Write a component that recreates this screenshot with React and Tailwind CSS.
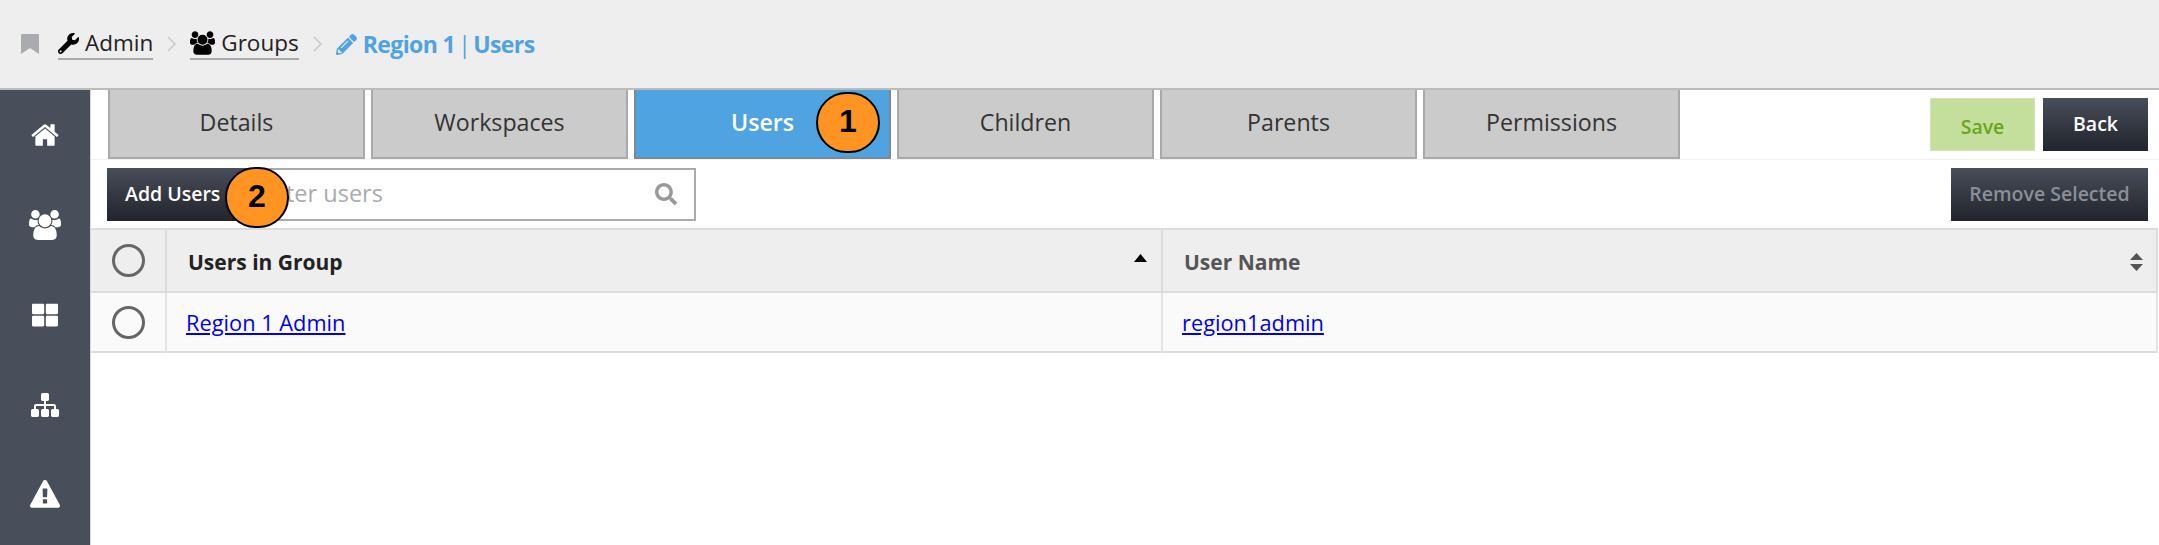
import React from 'react';
import { FaWrench, FaPencilAlt, FaThLarge, FaSearch } from 'react-icons/fa';

const tabs = ['Details', 'Workspaces', 'Users', 'Children', 'Parents', 'Permissions'];

// Font Awesome 4 shapes, the 5 versions in react-icons look different
const UsersIcon = ({ className }) => (
  <svg viewBox="0 0 1920 1792" fill="currentColor" className={className}>
    <path d="M593 896q-162 5-265 128h-134q-82 0-138-40.5t-56-118.5q0-353 124-353 6 0 43.5 21t97.5 42.5 119 21.5q67 0 133-23-5 37-5 66 0 139 81 256zm1071 637q0 120-73 189.5t-194 69.5h-874q-121 0-194-69.5t-73-189.5q0-53 3.5-103.5t14-109 26.5-108.5 43-97.5 62-81 85.5-53.5 111.5-20q10 0 43 21.5t73 48 107 48 135 21.5 135-21.5 107-48 73-48 43-21.5q61 0 111.5 20t85.5 53.5 62 81 43 97.5 26.5 108.5 14 109 3.5 103.5zm-1024-1277q0 106-75 181t-181 75-181-75-75-181 75-181 181-75 181 75 75 181zm704 384q0 159-112.5 271.5t-271.5 112.5-271.5-112.5-112.5-271.5 112.5-271.5 271.5-112.5 271.5 112.5 112.5 271.5zm576 225q0 78-56 118.5t-138 40.5h-134q-103-123-265-128 81-117 81-256 0-29-5-66 66 23 133 23 59 0 119-21.5t97.5-42.5 43.5-21q124 0 124 353zm-128-609q0 106-75 181t-181 75-181-75-75-181 75-181 181-75 181 75 75 181z" />
  </svg>
);

const HomeIcon = ({ className }) => (
  <svg viewBox="0 0 1792 1792" fill="currentColor" className={className}>
    <path d="M1472 992v480q0 26-19 45t-45 19h-384v-384h-256v384h-384q-26 0-45-19t-19-45v-480q0-1 .5-3t.5-3l575-474 575 474q1 2 1 6zm223-69l-62 74q-8 9-21 11h-3q-13 0-21-7l-692-577-692 577q-12 8-24 7-13-2-21-11l-62-74q-8-10-7-23.5t11-21.5l719-599q32-26 76-26t76 26l244 204v-195q0-14 9-23t23-9h192q14 0 23 9t9 23v408l219 182q10 8 11 21.5t-7 23.5z" />
  </svg>
);

const SitemapIcon = ({ className }) => (
  <svg viewBox="0 0 1792 1792" fill="currentColor" className={className}>
    <path d="M1792 1248v320q0 40-28 68t-68 28h-320q-40 0-68-28t-28-68v-320q0-40 28-68t68-28h96v-192h-512v192h96q40 0 68 28t28 68v320q0 40-28 68t-68 28h-320q-40 0-68-28t-28-68v-320q0-40 28-68t68-28h96v-192h-512v192h96q40 0 68 28t28 68v320q0 40-28 68t-68 28h-320q-40 0-68-28t-28-68v-320q0-40 28-68t68-28h96v-192q0-52 38-90t90-38h512v-192h-96q-40 0-68-28t-28-68v-320q0-40 28-68t68-28h320q40 0 68 28t28 68v320q0 40-28 68t-68 28h-96v192h512q52 0 90 38t38 90v192h96q40 0 68 28t28 68z" />
  </svg>
);

const WarningIcon = ({ className }) => (
  <svg viewBox="0 0 1792 1792" fill="currentColor" className={className}>
    <path d="M1024 1375v-190q0-14-9.5-23.5t-22.5-9.5h-192q-13 0-22.5 9.5t-9.5 23.5v190q0 14 9.5 23.5t22.5 9.5h192q13 0 22.5-9.5t9.5-23.5zm-2-374l18-459q0-12-10-19-13-11-24-11h-220q-11 0-24 11-10 7-10 21l17 457q0 10 10 16.5t24 6.5h185q14 0 23.5-6.5t10.5-16.5zm-14-934l768 1408q35 63-2 126-17 29-46.5 46t-63.5 17h-1536q-34 0-63.5-17t-46.5-46q-37-63-2-126l768-1408q17-31 47-49t65-18 65 18 47 49z" />
  </svg>
);

const Chevron = () => (
  <svg width="9" height="16" viewBox="0 0 9 16" className="mx-[14px]">
    <path d="M1 1l7 7-7 7" fill="none" stroke="#c8c8c8" strokeWidth="1.5" />
  </svg>
);

const sideIcons = [
  <HomeIcon className="w-[30px] h-[30px]" />,
  <UsersIcon className="w-[32px] h-[30px]" />,
  <FaThLarge className="text-[26px]" />,
  <SitemapIcon className="w-[28px] h-[28px]" />,
  <WarningIcon className="w-[30px] h-[30px]" />,
];

const darkBtn = 'h-[53px] bg-gradient-to-b from-[#484e5a] to-[#21242c] font-semibold text-[19.5px] pb-[2px]';

const Badge = ({ n, className }) => (
  <div
    className={`absolute w-[64px] h-[61px] rounded-full bg-[#ff9422] border-2 border-black flex items-center justify-center pb-[3px] text-[32px] font-bold text-black font-['Liberation_Sans',sans-serif] ${className}`}
  >
    {n}
  </div>
);

const Radio = () => (
  <div className="w-[33px] h-[33px] rounded-full border-[3px] border-[#666666] mx-auto" />
);

const Crumb = ({ icon, label }) => (
  <a className="flex items-center gap-[6px] border-b-2 border-[#aaaaaa] text-[#222222] h-[32px]">
    {icon}
    <span>{label}</span>
  </a>
);

const App = () => {
  return (
    <div className="w-[2159px] h-[545px] overflow-hidden flex flex-col bg-white font-['Open_Sans',sans-serif]">
      <header className="h-[90px] shrink-0 bg-[#eeeeee] border-b-2 border-[#bbbbbb] flex items-center pl-[21px] text-[22.5px]">
        <svg width="18" height="20" viewBox="0 0 18 20" className="mr-[19px]">
          <path d="M1 0H17a1 1 0 0 1 1 1V20L9 14L0 20V1a1 1 0 0 1 1-1Z" fill="#a9abae" />
        </svg>
        <Crumb icon={<FaWrench className="text-black text-[21px]" />} label="Admin" />
        <Chevron />
        <Crumb icon={<UsersIcon className="text-black w-[25px] h-[24px]" />} label="Groups" />
        <Chevron />
        <div className="flex items-center text-[#4ea3e0] font-bold text-[23px] tracking-[-0.6px]">
          <FaPencilAlt className="text-[21px] mr-[6px]" />
          <span>Region 1</span>
          <span className="mx-[3px] font-normal">|</span>
          <span>Users</span>
        </div>
      </header>

      <div className="flex flex-1 min-h-0">
        <aside className="w-[91px] shrink-0 bg-[#484f5b] border-r border-[#d8d8d8]">
          {sideIcons.map((icon, i) => (
            <div key={i} className="h-[90px] flex items-center justify-center text-white">
              {icon}
            </div>
          ))}
        </aside>

        <main className="flex-1 min-w-0">
          <div className="h-[70px] flex justify-between border-b border-[#f2f2f2] pl-[17px] pr-[11px]">
            <div className="flex gap-[6px]">
              {tabs.map((tab) => (
                <div
                  key={tab}
                  className={
                    tab === 'Users'
                      ? 'relative w-[257px] h-[69px] border-2 border-t-0 border-[#7d8a96] bg-[#4ea3e0] text-white font-semibold text-[23.2px] flex items-center justify-center pb-[1px] leading-none'
                      : 'w-[257px] h-[69px] border-2 border-t-0 border-[#a9a9a9] bg-[#cbcbcb] text-[#333333] text-[23.2px] flex items-center justify-center pb-[1px] leading-none'
                  }
                >
                  {tab}
                  {tab === 'Users' && <Badge n="1" className="left-[180px] top-[2px]" />}
                </div>
              ))}
            </div>
            <div className="flex gap-[8px] pt-[8px]">
              <button className="w-[105px] h-[53px] bg-[#c3df9b] border border-[#d2e5b5] text-[#6aa51e] font-semibold text-[19.5px] pt-[4px]">
                Save
              </button>
              <button className={`${darkBtn} w-[105px] text-white`}>Back</button>
            </div>
          </div>

          <div className="h-[68px] flex justify-between items-start pt-[8px] pl-[16px] pr-[11px]">
            <div className="relative flex">
              <button className={`${darkBtn} w-[140px] text-white text-left pl-[18px]`}>Add Users</button>
              <div className="w-[449px] h-[53px] border-2 border-[#aaaaaa] flex items-center justify-between pl-[13px] pr-[17px] pb-[2px] text-[23.5px] text-[#aaaaaa]">
                <span>Filter users</span>
                <FaSearch className="text-[22px] text-[#999999]" />
              </div>
              <Badge n="2" className="left-[118px] top-[-1px]" />
            </div>
            <button className={`${darkBtn} w-[197px] text-[#8a8f98]`}>Remove Selected</button>
          </div>

          <table className="w-[2067px] table-fixed border-collapse">
            <colgroup>
              <col className="w-[75px]" />
              <col className="w-[996px]" />
              <col />
            </colgroup>
            <thead>
              <tr className="h-[63px] bg-[#eeeeee] border-y-2 border-[#dcdcdc] text-[21px]">
                <th className="border-r-2 border-[#dcdcdc] pb-[1px]">
                  <Radio />
                </th>
                <th className="border-r-2 border-[#dcdcdc] text-left font-bold text-[#222222] pl-[21px] pt-[5px]">
                  <div className="flex items-center justify-between pr-[14px]">
                    Users in Group
                    <svg width="13" height="8" viewBox="0 0 13 8" className="mb-[11px]">
                      <path d="M6.5 0L13 8H0z" fill="#000000" />
                    </svg>
                  </div>
                </th>
                <th className="border-r-2 border-[#dcdcdc] text-left font-bold text-[#555555] pl-[21px] pt-[5px]">
                  <div className="flex items-center justify-between pr-[13px]">
                    User Name
                    <svg width="13" height="18" viewBox="0 0 13 18" className="mb-[3px]">
                      <path d="M6.5 0L13 7H0zM6.5 18L0 11H13z" fill="#555555" />
                    </svg>
                  </div>
                </th>
              </tr>
            </thead>
            <tbody>
              <tr className="h-[60px] bg-[#fafafa] border-b-2 border-[#dcdcdc] text-[21.8px]">
                <td className="border-r-2 border-[#e4e4e4]">
                  <Radio />
                </td>
                <td className="border-r-2 border-[#e4e4e4] pl-[19px] pt-[3px]">
                  <a className="text-[#0000ee] underline">Region 1 Admin</a>
                </td>
                <td className="border-r-2 border-[#e4e4e4] pl-[19px] pt-[3px]">
                  <a className="text-[#0000ee] underline">region1admin</a>
                </td>
              </tr>
            </tbody>
          </table>
        </main>
      </div>
    </div>
  );
};

export default App;
